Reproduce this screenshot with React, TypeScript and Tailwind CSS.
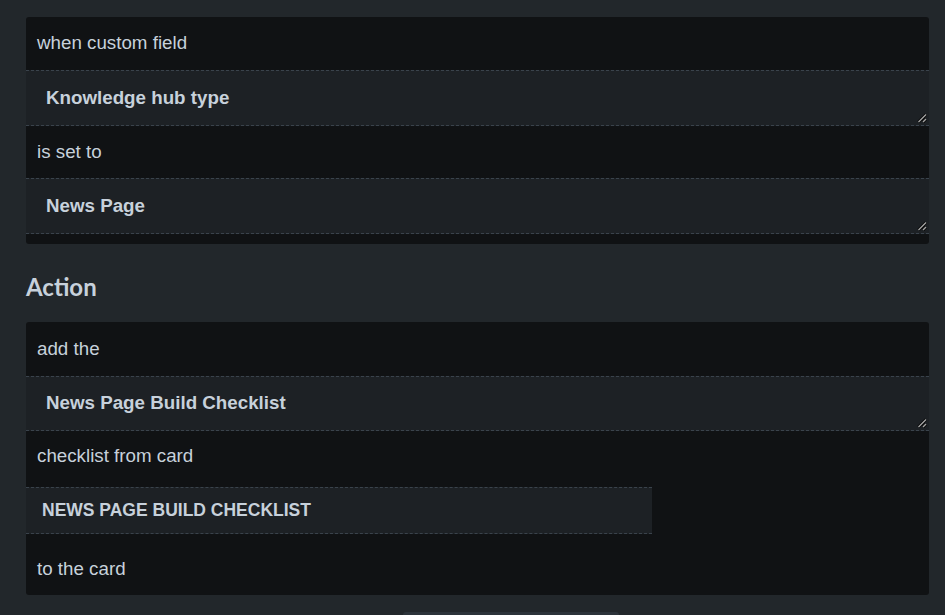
import React from "react";

function Grip() {
  return (
    <svg
      className="absolute right-[2px] bottom-[2px]"
      width="10"
      height="10"
      viewBox="0 0 10 10"
    >
      <line x1="1.5" y1="9" x2="9" y2="1.5" stroke="#000" strokeWidth="3" />
      <line x1="1.5" y1="9" x2="9" y2="1.5" stroke="#a3a3a3" strokeWidth="1.5" />
      <line x1="6" y1="9" x2="9" y2="6" stroke="#000" strokeWidth="3" />
      <line x1="6" y1="9" x2="9" y2="6" stroke="#a3a3a3" strokeWidth="1.5" />
    </svg>
  );
}

function Field({ text, h }: { text: string; h: string }) {
  return (
    <div
      className={`relative flex items-center ${h} bg-[#1d2125] border-y border-dashed border-[#3a434c] px-[20px] font-bold text-[#c7d1db]`}
    >
      {text}
      <Grip />
    </div>
  );
}

export default function App() {
  return (
    <div className="min-h-[615px] bg-[#22272b] font-['Liberation_Sans',Arial,sans-serif] text-[18.75px] text-[#c7d1db] overflow-hidden">
      <div className="ml-[26px] w-[903px] pt-[17px]">
        <div className="rounded-[3px] bg-[#101214] overflow-hidden">
          <div className="flex items-center h-[53px] px-[11px]">when custom field</div>
          <Field text="Knowledge hub type" h="h-[56px]" />
          <div className="flex items-center h-[52px] px-[11px]">is set to</div>
          <Field text="News Page" h="h-[56px]" />
          <div className="h-[10px]" />
        </div>

        <h2 className="mt-[27px] mb-[19px] h-[32px] leading-[32px] font-['Lato',sans-serif] font-bold text-[24px] text-[#c7d1db]">
          Action
        </h2>

        <div className="rounded-[3px] bg-[#101214] overflow-hidden">
          <div className="flex items-center h-[54px] px-[11px]">add the</div>
          <Field text="News Page Build Checklist" h="h-[55px]" />
          <div className="flex items-center h-[56px] pb-[6px] px-[11px]">checklist from card</div>
          <div className="flex items-center w-[626px] h-[47px] bg-[#1d2125] border-y border-dashed border-[#3a434c] px-[16px] font-bold text-[17.5px] uppercase">
            News Page Build Checklist
          </div>
          <div className="flex items-center h-[61px] pt-[10px] px-[11px]">to the card</div>
        </div>

        <div className="mt-[17px] ml-[377px] w-[216px] h-[32px] rounded-[3px] bg-[#2c333a]" />
      </div>
    </div>
  );
}
